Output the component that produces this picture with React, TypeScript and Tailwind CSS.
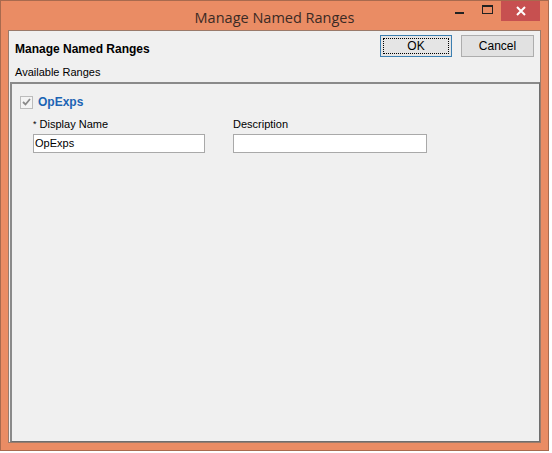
import React from 'react';

const font = { fontFamily: '"Liberation Sans", Arial, sans-serif' };

const WindowControls: React.FC = () => (
  <div className="flex items-start justify-end pr-[8px]">
    <div className="w-[29px] h-[20px] flex items-center justify-center">
      <div className="w-[9px] h-[2px] bg-[#222] mt-[4px]" />
    </div>
    <div className="w-[27px] h-[20px] flex items-center justify-center">
      <div className="w-[11px] h-[9px] border border-[#222] border-t-2 mb-[4px]" />
    </div>
    <div className="w-[39px] h-[20px] bg-[#c75050] flex items-center justify-center">
      <svg width="10" height="10" viewBox="0 0 10 10">
        <path d="M1 1 L9 9 M9 1 L1 9" stroke="#fff" strokeWidth="2" />
      </svg>
    </div>
  </div>
);

const App: React.FC = () => {
  return (
    <div className="w-[552px] h-[453px] bg-white" style={font}>
      <div className="w-[549px] h-[451px] border border-[#a86a4e] bg-[#ea8c64] flex flex-col">
        <div className="h-[29px] grid grid-cols-[1fr_auto_1fr]">
          <div />
          <div className="text-[14.5px] text-[#3a2a24] pt-[6px]" style={{ fontFamily: '"Open Sans", "Noto Sans", sans-serif' }}>
            Manage Named Ranges
          </div>
          <WindowControls />
        </div>

        <div className="flex-1 mx-[7px] mb-[7px] border border-[#9a7a6a] bg-[#f0f0f0] flex flex-col">
          <div className="flex justify-between pl-[6px] pr-[6px] pt-[4px] h-[51px]">
            <div className="flex flex-col">
              <div className="text-[12px] font-bold text-black pt-[7px] leading-[14px]">Manage Named Ranges</div>
              <div className="text-[11px] text-black pt-[9px] leading-[14px]">Available Ranges</div>
            </div>
            <div className="flex gap-[9px] items-start">
              <button className="w-[72px] h-[22px] bg-[#e5e5e5] border border-[#3c7fb1] text-[12px] text-black p-[2px]">
                <div className="w-full h-full border border-dotted border-black flex items-center justify-center">OK</div>
              </button>
              <button className="w-[73px] h-[22px] bg-[#e1e1e1] border border-[#adadad] text-[12px] text-black flex items-center justify-center">
                Cancel
              </button>
            </div>
          </div>

          <div className="flex-1 ml-[1px] border-t-2 border-l-2 border-r border-b border-t-[#8a8a8a] border-l-[#8a8a8a] border-r-[#6e6e6e] border-b-[#6e6e6e] bg-[#f0f0f0] px-[8px] pt-[9px]">
            <div className="flex items-center gap-[5px]">
              <div className="w-[13px] h-[13px] border border-[#bcbcbc] bg-[#f4f4f4] flex items-center justify-center">
                <svg width="9" height="8" viewBox="0 0 9 8">
                  <path d="M1 4 L3.5 6.5 L8 1" stroke="#8a8a8a" strokeWidth="1.8" fill="none" />
                </svg>
              </div>
              <span className="text-[12px] font-bold text-[#1c64b4]">OpExps</span>
            </div>

            <div className="flex gap-[28px] pl-[13px] pt-[6px]">
              <div className="flex flex-col">
                <div className="text-[11px] text-black leading-[14px]">
                  <span className="text-[9px] align-top">*</span> Display Name
                </div>
                <div className="mt-[3px] w-[172px] h-[19px] bg-white border border-[#a9a9a9] text-[11px] text-black px-[1px] flex items-center">
                  OpExps
                </div>
              </div>
              <div className="flex flex-col">
                <div className="text-[11px] text-black leading-[14px]">Description</div>
                <div className="mt-[3px] w-[194px] h-[19px] bg-white border border-[#a9a9a9]" />
              </div>
            </div>
          </div>
        </div>
      </div>
    </div>
  );
};

export default App;
